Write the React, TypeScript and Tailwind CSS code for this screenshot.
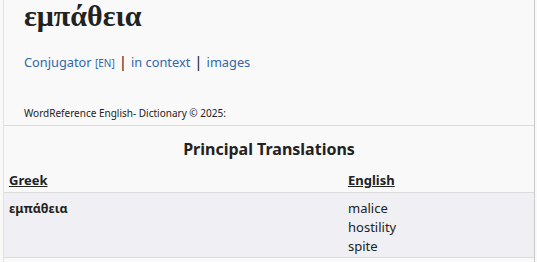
export default function App() {
  return (
    <div className="w-[537px] h-[262px] overflow-hidden bg-[#f9f9f9]" style={{ fontFamily: '"Noto Sans", sans-serif' }}>
      <div className="ml-[3px] w-[532px] h-[262px] border-l border-r border-l-[#e2e2e2] border-r-[#c8c8c8]">
        <div className="pl-[20px] pt-0">
          <h1 className="text-[30px] leading-[32px] font-bold text-[#222]" style={{ fontFamily: '"Liberation Serif", serif' }}>
            εμπάθεια
          </h1>
          <div className="mt-[20px] text-[12.8px] leading-[18px] text-[#3366aa]">
            <span>Conjugator <span className="text-[10px]">[EN]</span></span>
            <span className="text-[#222] mx-[4px] text-[15px]">|</span>
            <span>in context</span>
            <span className="text-[#222] mx-[4px] text-[15px]">|</span>
            <span>images</span>
          </div>
          <div className="mt-[35px] text-[10px] leading-[13px] text-[#222] pb-[5px]">
            WordReference English- Dictionary © 2025:
          </div>
        </div>
        <div className="border-t border-[#dcdcdc]">
          <div className="text-center font-bold text-[16px] leading-[22px] text-[#222] pt-[12px] pb-[8px]">
            Principal Translations
          </div>
          <div className="flex text-[13px] font-bold text-[#222] border-b border-[#dcdcdc] h-[25px] items-end pb-[2px]">
            <div className="w-[344px] pl-[5px]"><span className="underline">Greek</span></div>
            <div><span className="underline">English</span></div>
          </div>
          <div className="flex bg-[#f0f0f4] border-b border-[#dcdcdc] text-[13px] leading-[19px] text-[#222] pt-[6px] pb-[1px]">
            <div className="w-[344px] pl-[5px] font-bold text-[12.5px]">εμπάθεια</div>
            <div className="flex flex-col">
              <span>malice</span>
              <span>hostility</span>
              <span>spite</span>
            </div>
          </div>
          <div className="text-center text-[12px] leading-[18px] pt-[2px] text-[#222]">
            <span className="text-[#1a3c8c]">Is something important missing?</span> Report an error or suggest an improvement.
          </div>
        </div>
      </div>
    </div>
  );
}
